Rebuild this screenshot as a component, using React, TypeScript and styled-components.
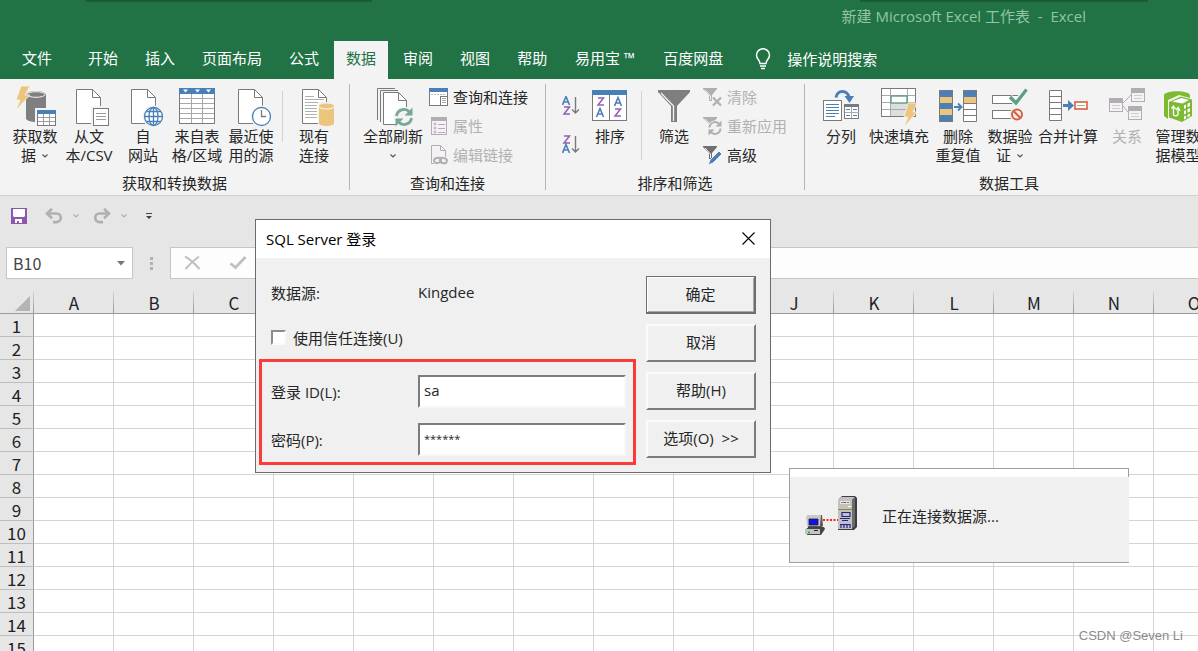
import React from "react";
import styled, { createGlobalStyle, css } from "styled-components";

const GREEN = "#217346";
const BLUE = "#4a80b8";
const GOLD = "#ecc57c";
const GREY = "#7a7a7a";
const MUTED = "#b0aeb0";
const SHEET_FONT = `"Noto Sans CJK SC", "Noto Sans", sans-serif`;

const GlobalStyle = createGlobalStyle`
  *, *::before, *::after { box-sizing: border-box; }
  body { margin: 0; overflow: hidden; background: #e6e6e6; }
  body, button, input {
    font-family: "Open Sans", "Noto Sans CJK SC", sans-serif;
    font-size: 15px;
    color: #262626;
  }
  svg { display: block; flex: none; }
`;

/* ---------- window frame ---------- */

const Window = styled.div`
  position: relative;
  display: flex;
  flex-direction: column;
  height: 100vh;
  overflow: hidden;
`;

const TitleBar = styled.header`
  height: 41px;
  flex: none;
  padding: 0 112px 0 0;
  display: flex;
  justify-content: flex-end;
  background:
    linear-gradient(rgba(0, 0, 0, 0.3), transparent) 86px 0 / 286px 3px no-repeat,
    linear-gradient(rgba(0, 0, 0, 0.3), transparent) 860px 0 / 288px 3px no-repeat,
    ${GREEN};
`;

const Title = styled.span`
  line-height: 32px;
  color: #93c4a6;
  white-space: pre;
`;

const TabStrip = styled.nav`
  height: 38px;
  flex: none;
  display: flex;
  gap: 3px;
  padding-left: 10px;
  background: ${GREEN};
`;

const Tab = styled.button<{ $active?: boolean; $file?: boolean; $wide?: boolean }>`
  border: 0;
  padding: 0 12px 5px;
  white-space: nowrap;
  background: ${(p) => (p.$active ? "#f3f3f3" : "transparent")};
  color: ${(p) => (p.$active ? GREEN : "#fff")};
  ${(p) => p.$file && css`margin-right: 9px;`}
  ${(p) => p.$wide && css`width: 86px; padding-inline: 0;`}
`;

const TellMe = styled.button`
  display: flex;
  align-items: center;
  gap: 16px;
  margin-left: 17px;
  padding: 0 0 3px;
  border: 0;
  background: transparent;
  color: #fff;
  white-space: nowrap;
`;

/* ---------- ribbon ---------- */

const Ribbon = styled.div`
  height: 117px;
  flex: none;
  display: flex;
  overflow: hidden;
  background: #f3f3f3;
  border-bottom: 1px solid #d0d0d0;
`;

const Group = styled.section`
  position: relative;
  flex: none;
  display: flex;
  flex-direction: column;
  justify-content: space-between;
  padding: 4px 9px 2px 8px;
  &::after {
    content: "";
    position: absolute;
    right: 0;
    top: 5px;
    bottom: 5px;
    width: 1px;
    background: #b5b5b5;
  }
`;

const GroupItems = styled.div`
  display: flex;
  align-items: flex-start;
`;

const GroupLabel = styled.div`
  text-align: center;
  line-height: 20px;
`;

const Big = styled.button<{ $w?: number }>`
  width: ${(p) => p.$w ?? 54}px;
  padding: 2px 0 0;
  border: 0;
  background: transparent;
  display: flex;
  flex-direction: column;
  align-items: center;
  line-height: 19px;
  white-space: nowrap;
  &:disabled { color: #b1b1b1; }
`;

const Line = styled.span`
  height: 19px;
  display: flex;
  align-items: center;
  gap: 5px;
`;

const Rule = styled.div<{ $h: number; $before?: number }>`
  width: 1px;
  height: ${(p) => p.$h}px;
  margin: 8px 4px 0 ${(p) => p.$before ?? 4}px;
  background: #d2d2d2;
`;

const SmallColumn = styled.div`
  display: flex;
  flex-direction: column;
  padding: 0 9px 0 1px;
`;

const Small = styled.button`
  height: 29px;
  padding: 0 0 2px;
  border: 0;
  background: transparent;
  display: flex;
  align-items: center;
  gap: 4px;
  white-space: nowrap;
  &:disabled { color: #b1b1b1; }
`;

const SortColumn = styled.div`
  display: flex;
  flex-direction: column;
  width: 34px;
  padding: 3px 0 0 8px;
`;

const SortButton = styled.button`
  height: 39px;
  padding: 0;
  border: 0;
  background: transparent;
`;

/* ---------- quick access and formula bar ---------- */

const QuickAccess = styled.div`
  height: 51px;
  flex: none;
  display: flex;
  align-items: flex-start;
  padding: 10px 0 0 10px;
`;

const QuickButton = styled.button<{ $w: number }>`
  width: ${(p) => p.$w}px;
  height: 20px;
  padding: 0;
  border: 0;
  background: transparent;
  display: flex;
  align-items: center;
`;

const FormulaRow = styled.div`
  height: 32px;
  flex: none;
  display: flex;
  padding-left: 6px;
`;

const NameBox = styled.div`
  width: 127px;
  display: flex;
  align-items: center;
  border: 1px solid #c6c6c6;
  background: #fff;
  padding: 0 7px 0 6px;
`;

const NameInput = styled.input`
  flex: 1;
  min-width: 0;
  padding: 0;
  border: 0;
  background: transparent;
  font-family: ${SHEET_FONT};
  font-size: 16px;
  color: #444;
`;

const Grip = styled.div`
  width: 37px;
  display: flex;
  flex-direction: column;
  align-items: center;
  justify-content: center;
  gap: 2px;
  i { width: 3px; height: 3px; background: #b0b0b0; }
`;

const FormulaBox = styled.div`
  flex: 1;
  display: flex;
  align-items: center;
  gap: 28px;
  padding-left: 13px;
  border: 1px solid #c6c6c6;
  border-right: 0;
  background: #fdfdfd;
`;

const FormulaAction = styled.button`
  padding: 0;
  border: 0;
  background: transparent;
`;

/* ---------- sheet ---------- */

const SheetArea = styled.main`
  flex: 1;
  min-height: 0;
  overflow: auto;
  scrollbar-width: none;
  padding-top: 12px;
`;

const Sheet = styled.table`
  table-layout: fixed;
  width: max-content;
  border-collapse: separate;
  border-spacing: 0;
  font-family: ${SHEET_FONT};
  font-size: 17px;
  background: #fff;
`;

const ColHead = styled.th`
  width: 80px;
  height: 23px;
  padding: 2px 0 0;
  font-weight: 400;
  line-height: 20px;
  color: #222;
  border-bottom: 1px solid #9b9b9b;
  background:
    linear-gradient(#d8d8d8, #979797) right / 1px 100% no-repeat,
    #e6e6e6;
`;

const Corner = styled(ColHead)`
  width: 34px;
  svg { margin: 1px 0 0 15px; }
`;

const RowHead = styled.th`
  height: 23px;
  padding: 2px 0 0;
  font-weight: 400;
  line-height: 20px;
  color: #222;
  background: #e6e6e6;
  border-right: 1px solid #9b9b9b;
  border-bottom: 1px solid #bdbdbd;
`;

const Cell = styled.td`
  padding: 0;
  border-right: 1px solid #d4d4d4;
  border-bottom: 1px solid #d4d4d4;
`;

/* ---------- login dialog ---------- */

const Dialog = styled.form`
  position: absolute;
  left: 255px;
  top: 219px;
  border: 1px solid #6b6b6b;
  background: #f0f0f0;
`;

const DialogTitle = styled.div`
  height: 38px;
  display: flex;
  align-items: center;
  justify-content: space-between;
  padding: 0 15px 2px 10px;
  background: #fff;
  color: #000;
`;

const CloseButton = styled.button`
  padding: 0;
  border: 0;
  background: transparent;
`;

const DialogBody = styled.div`
  display: flex;
  gap: 10px;
  padding: 18px 14px 7px 3px;
`;

const Fields = styled.div`
  width: 377px;
  display: flex;
  flex-direction: column;
`;

const InfoRow = styled.div`
  height: 36px;
  margin-bottom: 9px;
  padding: 0 0 4px 12px;
  display: flex;
  align-items: center;
`;

const FieldLabel = styled.label`
  width: 147px;
`;

const TrustLabel = styled.label`
  height: 36px;
  padding: 0 0 3px 12px;
  display: flex;
  align-items: center;
  gap: 7px;
`;

const Check = styled.input`
  appearance: none;
  width: 15px;
  height: 15px;
  margin: 0;
  background: #fff;
  border: 2px solid;
  border-color: #8c8c8c #fafafa #fafafa #8c8c8c;
`;

const Highlight = styled.div`
  margin-top: 2px;
  padding: 6px 0 0 9px;
  display: flex;
  flex-direction: column;
  gap: 2px;
  border: 3px solid #fb3b39;
`;

const FieldRow = styled.div`
  height: 46px;
  display: flex;
  align-items: center;
`;

const TextBox = styled.input<{ $masked?: boolean }>`
  width: 208px;
  height: 33px;
  padding: 0 4px 2px;
  background: #fff;
  border: 2px solid;
  border-color: #7c7c7c #f8f8f8 #f8f8f8 #7c7c7c;
  ${(p) => p.$masked && css`font-size: 11px;`}
`;

const Buttons = styled.div`
  display: flex;
  flex-direction: column;
  gap: 10px;
`;

const PushButton = styled.button<{ $primary?: boolean }>`
  width: 110px;
  height: 38px;
  padding: 0 0 3px;
  background: #f0f0f0;
  white-space: pre;
  border: 2px solid;
  border-color: #fafafa #7c7c7c #7c7c7c #fafafa;
  ${(p) =>
    p.$primary &&
    css`
      border-width: 1px 2px 2px 1px;
      border-color: #6e6e6e;
      box-shadow: inset 1px 1px #fff, inset -1px -1px #a8a8a8;
    `}
`;

/* ---------- connection notice ---------- */

const Notice = styled.div`
  position: absolute;
  left: 789px;
  top: 468px;
  width: 340px;
  border: 1px solid #a0a0a0;
  border-right: 0;
  background: #f0f0f0;
`;

const NoticeStrip = styled.div`
  height: 8px;
  background: #fff;
  border-right: 1px solid #a0a0a0;
`;

const NoticeBody = styled.div`
  height: 85px;
  padding: 0 0 8px 15px;
  display: flex;
  align-items: center;
  gap: 24px;
`;

const Watermark = styled.div`
  position: absolute;
  right: 15px;
  bottom: 6px;
  font-family: "Liberation Sans", sans-serif;
  font-size: 13px;
  line-height: 18px;
  color: #8c8c8c;
`;

/* ---------- icons ---------- */

const Icon = ({ children, w = 44, h = 42 }: { children: React.ReactNode; w?: number; h?: number }) => (
  <svg width={w} height={h} viewBox={`0 0 ${w} ${h}`} fill="none" aria-hidden="true">
    {children}
  </svg>
);

const Chevron = ({ color = "#555" }: { color?: string }) => (
  <svg width="8" height="6" viewBox="0 0 8 6" fill="none" aria-hidden="true">
    <path d="M1.500 1.500 4 4 6.500 1.500" stroke={color} strokeWidth="1.200" />
  </svg>
);

const Page = ({ x = 9, y = 4 }: { x?: number; y?: number }) => (
  <g transform={`translate(${x} ${y})`} stroke={GREY}>
    <path d="M.5.5H16.5L24.5 8.5V34.5H.5Z" fill="#fff" />
    <path d="M16.5.5V8.5H24.5" />
  </g>
);

const GetDataIcon = () => (
  <Icon>
    <path d="M13 9.500a10 3.500 0 0 1 20 0V33.500a10 3.500 0 0 1-20 0Z" fill="#7f7f7f" />
    <ellipse cx="23" cy="9.500" rx="9" ry="2.800" fill="#7f7f7f" stroke="#f3f3f3" />
    <path d="M8 1H17L12 10H17L3 25 7 15H3Z" fill={GOLD} stroke="#f3f3f3" strokeWidth=".8" />
    <rect x="22" y="23" width="22" height="19" fill="#f3f3f3" />
    <rect x="24.500" y="25.500" width="18" height="15" fill="#fff" stroke={GREY} />
    <path d="M24 25h19v4H24Z" fill={BLUE} />
    <path d="M30.500 29v11M36.500 29v11M25 32.500h17M25 36.500h17" stroke="#9b9b9b" />
  </Icon>
);

const TextFileIcon = () => (
  <Icon>
    <Page />
    <rect x="24" y="21" width="20" height="21" fill="#f3f3f3" />
    <rect x="26.500" y="23.500" width="15" height="17" fill="#fff" stroke={GREY} />
    <path d="M29 28.500h10M29 31.500h10M29 34.500h10" stroke="#9b9b9b" />
  </Icon>
);

const WebIcon = () => (
  <Icon>
    <Page x={10} />
    <circle cx="32.500" cy="31.500" r="11" fill="#f3f3f3" />
    <g stroke={BLUE} strokeWidth="1.300">
      <circle cx="32.500" cy="31.500" r="9" fill="#fff" />
      <ellipse cx="32.500" cy="31.500" rx="4.500" ry="9" />
      <path d="M32.500 22.500v18M23.500 31.500h18M25 26.500h15M25 36.500h15" />
    </g>
  </Icon>
);

const TableIcon = () => (
  <Icon>
    <rect x="4.500" y="3.500" width="35" height="35" fill="#fff" stroke={GREY} />
    <path d="M4 3h36v6H4Z" fill={BLUE} />
    <path d="M8 4.500h5L10.500 7.500ZM20 4.500h5L22.500 7.500ZM31 4.500h5L33.500 7.500Z" fill="#fff" />
    <path d="M16.500 9v29M27.500 9v29M5 13.500h34M5 18.500h34M5 23.500h34M5 28.500h34M5 33.500h34" stroke="#a8a8a8" />
  </Icon>
);

const RecentIcon = () => (
  <Icon>
    <Page />
    <circle cx="32.500" cy="31.500" r="11" fill="#f3f3f3" />
    <circle cx="32.500" cy="31.500" r="9" fill="#fff" stroke={BLUE} strokeWidth="1.300" />
    <path d="M32.500 25v6.500H37" stroke={GREY} strokeWidth="1.300" />
  </Icon>
);

const ExistingIcon = () => (
  <Icon>
    <Page x={10} />
    <path d="M13 11.500h9M13 14.500h19M13 17.500h13M13 20.500h12M13 23.500h12M13 26.500h12M13 29.500h12M13 32.500h12" stroke="#b0b0b0" />
    <path d="M26 17h17v25H26Z" fill="#f3f3f3" />
    <path d="M27 21a7.500 2.500 0 0 1 15 0V38.500a7.500 2.500 0 0 1-15 0Z" fill={GOLD} />
    <path d="M27 21.500a7.500 2.500 0 0 0 15 0" stroke="#fff" />
  </Icon>
);

const RefreshAllIcon = () => (
  <Icon>
    <path d="M6.500 35V3.500H24M9.500 37V5.500H27" stroke={GREY} />
    <path d="M12.500 7.500H27.500L35.500 15.500V39.500H12.500Z" fill="#fff" stroke={GREY} />
    <path d="M27.500 7.500V15.500H35.500" stroke={GREY} />
    <circle cx="33" cy="32" r="10.500" fill="#f3f3f3" />
    <path d="M25.500 31a7.500 7.500 0 0 1 13-4M40.500 33a7.500 7.500 0 0 1-13 4" stroke="#76a895" strokeWidth="2.800" />
    <path d="M41.500 22.500V30.500H33.500ZM24.500 41.500V33.500H32.500Z" fill="#76a895" />
  </Icon>
);

const QueriesIcon = () => (
  <Icon w={20} h={20}>
    <rect x=".5" y="1.500" width="18" height="17" fill="#fff" stroke={GREY} />
    <path d="M0 1h19v4H0Z" fill={BLUE} />
    <path d="M2 7.500h2M5 7.500h2M8 7.500h2M11 7.500h2M14 7.500h2" stroke="#bbb" />
    <path d="M11.500 9V18M12 9.500h6" stroke={GREY} />
    <path d="M13 11.500h4M13 13.500h4M13 15.500h4" stroke="#aaa" />
  </Icon>
);

const PropertiesIcon = () => (
  <Icon w={20} h={20}>
    <rect x="2.500" y="1.500" width="15" height="17" fill="#f6f1f7" stroke={MUTED} />
    <path d="M2 1h16v4H2Z" fill={MUTED} />
    <g stroke={MUTED}>
      <circle cx="6" cy="8" r="1" /><circle cx="6" cy="12" r="1" /><circle cx="6" cy="16" r="1" />
      <path d="M9 8.500h7M9 12.500h7M9 16.500h7" />
    </g>
  </Icon>
);

const EditLinksIcon = () => (
  <Icon w={20} h={20}>
    <path d="M2.500 18.500V.5H11.500L16.500 5.500V12" fill="#f6f1f7" stroke={MUTED} />
    <path d="M11.500.5V5.500H16.500M2.500 18.500H5" stroke={MUTED} />
    <g stroke={MUTED} strokeWidth="2">
      <rect x="5" y="13" width="7" height="5" rx="2.500" transform="rotate(-12 8 15)" />
      <rect x="11" y="13" width="7" height="5" rx="2.500" transform="rotate(12 14 15)" />
    </g>
  </Icon>
);

const LetterA = ({ x, y }: { x: number; y: number }) => (
  <path transform={`translate(${x} ${y})`} d="M.5 9 4 .5 7.500 9M1.800 6h4.400" stroke={BLUE} strokeWidth="1.600" />
);
const LetterZ = ({ x, y }: { x: number; y: number }) => (
  <path transform={`translate(${x} ${y})`} d="M1 1H6.500L1 8H7" stroke="#9161b3" strokeWidth="1.500" />
);

const SortIcon = ({ desc }: { desc?: boolean }) => (
  <Icon w={20} h={20}>
    {desc ? (
      <><LetterZ x={1} y={0} /><LetterA x={0} y={9} /></>
    ) : (
      <><LetterA x={0} y={0} /><LetterZ x={1} y={10} /></>
    )}
    <path d="M13.500 1V17M10 13.500 13.500 17 17 13.500" stroke={GREY} strokeWidth="1.400" />
  </Icon>
);

const SortDialogIcon = () => (
  <Icon>
    <rect x="4.500" y="5.500" width="34" height="30" fill="#fff" stroke={GREY} />
    <path d="M4 5h35v5H4Z" fill={BLUE} />
    <path d="M21.500 10v25" stroke={GREY} />
    <LetterZ x={9} y={12} /><LetterA x={8} y={23} />
    <LetterA x={26} y={12} /><LetterZ x={26} y={23} />
  </Icon>
);

const FilterIcon = () => (
  <Icon>
    <path d="M6 5H38V7L25 21V37H19V21L6 7Z" fill="#7f7f7f" />
    <path d="M9 8 21.500 21V36" stroke="#f3f3f3" strokeWidth="1.300" />
  </Icon>
);

const funnel = "M0 1H14V2L9 8V14H6V8L0 2Z";

const ClearIcon = () => (
  <Icon w={20} h={20}>
    <path d={funnel} fill={MUTED} /><path d="M2 3 7.500 9V13" stroke="#f3f3f3" />
    <path d="M10 10.500 18 18.500M18 10.500 10 18.500" stroke="#f3f3f3" strokeWidth="4" />
    <path d="M10 10.500 18 18.500M18 10.500 10 18.500" stroke={MUTED} strokeWidth="2.200" />
  </Icon>
);

const ReapplyIcon = () => (
  <Icon w={20} h={20}>
    <path d={funnel} fill={MUTED} /><path d="M2 3 7.500 9V13" stroke="#f3f3f3" />
    <circle cx="12" cy="12" r="7.500" fill="#f3f3f3" />
    <path d="M6.500 11.500a5.500 5.500 0 0 1 10-3M17.500 12.500a5.500 5.500 0 0 1-10 3" stroke={MUTED} strokeWidth="2" />
    <path d="M18.500 4.500V10.500H12.500ZM5.500 19.500V13.500H11.500Z" fill={MUTED} />
  </Icon>
);

const AdvancedIcon = () => (
  <Icon w={20} h={20}>
    <path d={funnel} fill="#6f6f6f" /><path d="M2 3 7.500 9V13" stroke="#f3f3f3" />
    <path d="M5 20 7 15 16 6 19 9 10 18Z" fill={BLUE} stroke="#f3f3f3" />
  </Icon>
);

const SplitIcon = () => (
  <Icon>
    <rect x="4.500" y="15.500" width="18" height="20" fill="#fff" stroke={GREY} />
    <path d="M7 19.500h13M7 22.500h13M7 25.500h13M7 28.500h13M7 31.500h9" stroke={BLUE} />
    <rect x="25.500" y="19.500" width="14" height="14" fill="#fff" stroke={GREY} />
    <path d="M25 19h15v3H25Z" fill={GREY} />
    <path d="M32.500 22v11M26 27.500h14" stroke="#aaa" />
    <path d="M27 24.500h4M34 24.500h4M27 30.500h4M34 30.500h4" stroke={BLUE} />
    <path d="M17 12.500C18 5 28 4 30.500 13" stroke={BLUE} strokeWidth="3" />
    <path d="M25.500 11H35L30.500 18Z" fill={BLUE} />
  </Icon>
);

const FlashFillIcon = () => (
  <Icon>
    <rect x="4.500" y="3.500" width="34" height="28" fill="#fff" stroke={GREY} />
    <path d="M14 18h16v13H14Z" fill="#dedede" />
    <path d="M13.500 4v27M30.500 4v27M5 10.500h33M5 17.500h33M5 24.500h33" stroke="#ababab" />
    <rect x="14" y="11" width="16" height="7" fill="#fff" stroke="#5d9f84" strokeWidth="1.400" />
    <path d="M31 18H40L36 27H40L27 42 31 32H27Z" fill={GOLD} stroke="#f3f3f3" strokeWidth=".8" />
  </Icon>
);

const DuplicatesIcon = () => (
  <Icon>
    <path d="M3 5h14v32H3ZM27 5h14v7H27Z" fill={BLUE} />
    <path d="M4 12h12v6H4ZM4 24h12v6H4ZM28 12h12v6H28Z" fill={GOLD} />
    <path d="M28 18h12v18H28Z" fill="#fff" />
    <path d="M3.500 5.500h13v31h-13ZM27.500 5.500h13v31h-13ZM28 18.500h12M28 24.500h12M28 30.500h12" stroke={GREY} />
    <path d="M18 22h7M22 18.500 25.500 22 22 25.500" stroke={BLUE} strokeWidth="1.800" />
  </Icon>
);

const ValidationIcon = () => (
  <Icon>
    <rect x="4.500" y="10.500" width="26" height="8" fill="#fff" stroke={GREY} />
    <rect x="4.500" y="25.500" width="26" height="8" fill="#fff" stroke={GREY} />
    <path d="M22 12 28 18 38.500 4.500" stroke="#f3f3f3" strokeWidth="6" />
    <path d="M22 12 28 18 38.500 4.500" stroke="#5d9f84" strokeWidth="3.200" />
    <circle cx="29" cy="29.500" r="7.500" fill="#f3f3f3" />
    <circle cx="29" cy="29.500" r="5" stroke="#d9603f" strokeWidth="2" />
    <path d="M25.500 26 32.500 33" stroke="#d9603f" strokeWidth="2" />
  </Icon>
);

const ConsolidateIcon = () => (
  <Icon>
    <path d="M3.500 5.500h12v30h-12ZM3.500 11.500h12M3.500 17.500h12M3.500 23.500h12M3.500 29.500h12" fill="#fff" stroke={GREY} />
    <path d="M17 19h5v-4l6 5.500-6 5.500v-4h-5Z" fill={BLUE} />
    <rect x="29" y="17" width="12" height="7" fill="#fff" stroke="#d9603f" strokeWidth="1.600" />
    <path d="M31 20.500h8" stroke="#aaa" />
  </Icon>
);

const RelationBox = ({ x, y }: { x: number; y: number }) => (
  <g transform={`translate(${x} ${y})`}>
    <rect x=".5" y=".5" width="13" height="13" fill="#f6f1f7" stroke={MUTED} />
    <path d="M0 0h14v5H0Z" fill={MUTED} />
    <path d="M3 7.500h8M3 10.500h8" stroke="#d0ccd2" />
  </g>
);

const RelationsIcon = () => (
  <Icon>
    <path d="M18 18 26 10M18 21 23 27" stroke={MUTED} />
    <RelationBox x={4} y={13} /><RelationBox x={26} y={3} /><RelationBox x={23} y={21} />
  </Icon>
);

const ModelIcon = () => (
  <Icon>
    <path d="M8 10C10 5 32 5 34 10V13L23 10 12 15V34L8 31Z" fill="#7dba32" />
    <path d="M13 17 25 11.500 36 14.500V31L26 37 13 32.500Z" fill="#7dba32" />
    <path d="M16 16.500 25.500 13 33 15 26.500 18.500Z" fill="#fff" />
    <path d="M28 20.500 30 19.500V23L28 24ZM31.500 18.800 34 17.500V21L31.500 22.200ZM28 26 30 25V28.500L28 29.500ZM31.500 24.200 34 23V26.500L31.500 27.700ZM28 31.500 30 30.500V33.500L28 34.500ZM31.500 29.700 34 28.500V31L31.500 32.500Z" fill="#fff" />
    <path d="M17.500 22V29.500C17.500 31 21.500 31.500 22 29.500V23.500" stroke="#fff" strokeWidth="1.300" />
    <path d="M15.500 23.500 17.500 21 19.500 24M20 25 22.200 22.500 24 26" stroke="#fff" strokeWidth="1.300" />
  </Icon>
);

const UndoArrow = ({ flip }: { flip?: boolean }) => (
  <svg width="18" height="16" viewBox="0 0 18 16" fill="none" aria-hidden="true">
    <g transform={flip ? "translate(18 0) scale(-1 1)" : undefined} stroke="#b0b0b0" strokeWidth="2.600">
      <path d="M2 5.500H11.500a4.300 4.300 0 0 1 0 8.600H8" />
      <path d="M7 .8 2 5.500 7 10.200" />
    </g>
  </svg>
);

const ConnectingArt = () => (
  <Icon w={53} h={42}>
    <path d="M34 4 37 1H50L52 3V32L49 35H33V6Z" fill="#3d3d3d" />
    <path d="M33 5 36 2H50L47 5V34H33Z" fill="#c2c2c2" />
    <path d="M47 5 50 2V31L47 34Z" fill="#6b6b6b" />
    <path d="M35 6h10v3H35Z" fill="#e4e4e4" />
    <path d="M36 7.500h3" stroke="#888" /><path d="M39 7.500h2" stroke="#d22" /><path d="M42 7.500h2" stroke="#2b2" />
    <path d="M33 14.500h14" stroke="#918a2a" />
    <path d="M43 11.500h3" stroke="#fff" />
    <path d="M37 17.500h8v4h-8ZM35 23.500h10M37 25.500h6M35 29.500h10M36 33V29M39 33V30M42 33V30M45 33V29" stroke="#24248c" strokeWidth="1.200" />
    <path d="M18 25h15" stroke="#f22" strokeWidth="2" strokeDasharray="2 1.500" />
    <path d="M2 21 4 20H17L18 31 15 33H3Z" fill="#555" />
    <path d="M1 22 3 20H16L15 31H2Z" fill="#c9c9c9" />
    <path d="M4 24h9v6H4Z" fill="#11e" stroke="#222" strokeWidth=".8" />
    <path d="M1 34 4 32H19L20 34 16 40H2Z" fill="#444" />
    <path d="M0 34H15V39H0Z" fill="#c4c4c4" />
    <path d="M3 37.500h2" stroke="#0b0" strokeWidth="1.500" /><path d="M9 35.500h4" stroke="#222" />
  </Icon>
);

/* ---------- data ---------- */

type BigItem = { icon: React.ReactNode; lines: string[]; w?: number; drop?: boolean; disabled?: boolean };

const getItems: BigItem[] = [
  { icon: <GetDataIcon />, lines: ["获取数", "据"], drop: true },
  { icon: <TextFileIcon />, lines: ["从文", "本/CSV"] },
  { icon: <WebIcon />, lines: ["自", "网站"] },
  { icon: <TableIcon />, lines: ["来自表", "格/区域"] },
  { icon: <RecentIcon />, lines: ["最近使", "用的源"] },
];

const toolItems: BigItem[] = [
  { icon: <SplitIcon />, lines: ["分列"], w: 56 },
  { icon: <FlashFillIcon />, lines: ["快速填充"], w: 60 },
  { icon: <DuplicatesIcon />, lines: ["删除", "重复值"], w: 58 },
  { icon: <ValidationIcon />, lines: ["数据验", "证"], w: 46, drop: true },
  { icon: <ConsolidateIcon />, lines: ["合并计算"], w: 70 },
  { icon: <RelationsIcon />, lines: ["关系"], w: 48, disabled: true },
  { icon: <ModelIcon />, lines: ["管理数", "据模型"], w: 54 },
];

const BigButton = ({ icon, lines, w, drop, disabled }: BigItem) => (
  <Big type="button" $w={w} disabled={disabled}>
    {icon}
    {lines.map((line, i) => (
      <Line key={i}>
        {line}
        {drop && i === lines.length - 1 && <Chevron />}
      </Line>
    ))}
  </Big>
);

const tabs = ["开始", "插入", "页面布局", "公式", "数据", "审阅", "视图", "帮助", "易用宝 ™", "百度网盘"];
const columns = "ABCDEFGHIJKLMNOPQRST".split("");
const rows = Array.from({ length: 30 }, (_, i) => i + 1);

export default function App() {
  return (
    <Window>
      <GlobalStyle />
      <TitleBar>
        <Title>{"新建 Microsoft Excel 工作表  -  Excel"}</Title>
      </TitleBar>

      <TabStrip>
        <Tab type="button" $file>文件</Tab>
        {tabs.map((t) => (
          <Tab key={t} type="button" $active={t === "数据"} $wide={t.includes("™")}>{t}</Tab>
        ))}
        <TellMe type="button">
          <svg width="16" height="22" viewBox="0 0 16 22" fill="none" stroke="#fff" strokeWidth="1.500" aria-hidden="true">
            <path d="M5 15.500C5 12 1.500 11 1.500 7.200a6.500 6.500 0 0 1 13 0C14.500 11 11 12 11 15.500Z" />
            <path d="M5 18h6M6 20.500h4" />
          </svg>
          操作说明搜索
        </TellMe>
      </TabStrip>

      <Ribbon>
        <Group>
          <GroupItems>
            {getItems.map((item) => <BigButton key={item.lines[0]} {...item} />)}
            <Rule $h={51} />
            <BigButton icon={<ExistingIcon />} lines={["现有", "连接"]} />
          </GroupItems>
          <GroupLabel>获取和转换数据</GroupLabel>
        </Group>

        <Group>
          <GroupItems>
            <BigButton icon={<RefreshAllIcon />} lines={["全部刷新", ""]} w={70} drop />
            <SmallColumn>
              <Small type="button"><QueriesIcon />查询和连接</Small>
              <Small type="button" disabled><PropertiesIcon />属性</Small>
              <Small type="button" disabled><EditLinksIcon />编辑链接</Small>
            </SmallColumn>
          </GroupItems>
          <GroupLabel>查询和连接</GroupLabel>
        </Group>

        <Group>
          <GroupItems>
            <SortColumn>
              <SortButton type="button" aria-label="升序"><SortIcon /></SortButton>
              <SortButton type="button" aria-label="降序"><SortIcon desc /></SortButton>
            </SortColumn>
            <BigButton icon={<SortDialogIcon />} lines={["排序"]} w={44} />
            <Rule $h={69} $before={9} />
            <BigButton icon={<FilterIcon />} lines={["筛选"]} w={56} />
            <SmallColumn>
              <Small type="button" disabled><ClearIcon />清除</Small>
              <Small type="button" disabled><ReapplyIcon />重新应用</Small>
              <Small type="button"><AdvancedIcon />高级</Small>
            </SmallColumn>
          </GroupItems>
          <GroupLabel>排序和筛选</GroupLabel>
        </Group>

        <Group>
          <GroupItems>
            {toolItems.map((item) => <BigButton key={item.lines[0]} {...item} />)}
          </GroupItems>
          <GroupLabel>数据工具</GroupLabel>
        </Group>
      </Ribbon>

      <QuickAccess>
        <QuickButton type="button" aria-label="保存" $w={35}>
          <svg width="18" height="18" viewBox="0 0 18 18" aria-hidden="true">
            <path d="M1 1H17V17H1Z" fill="#8d57ad" />
            <path d="M3 2H15V9L14 10H4L3 9ZM5 12H12V16H9V14H7V16H5Z" fill="#fff" />
          </svg>
        </QuickButton>
        <QuickButton type="button" aria-label="撤消" $w={27}><UndoArrow /></QuickButton>
        <QuickButton type="button" aria-label="撤消选项" $w={21}><Chevron color="#b0b0b0" /></QuickButton>
        <QuickButton type="button" aria-label="恢复" $w={27}><UndoArrow flip /></QuickButton>
        <QuickButton type="button" aria-label="恢复选项" $w={25}><Chevron color="#b0b0b0" /></QuickButton>
        <QuickButton type="button" aria-label="自定义" $w={12}>
          <svg width="8" height="8" viewBox="0 0 8 8" aria-hidden="true">
            <path d="M1 1h6v1H1ZM1 4h6L4 7Z" fill="#444" />
          </svg>
        </QuickButton>
      </QuickAccess>

      <FormulaRow>
        <NameBox>
          <NameInput aria-label="名称框" defaultValue="B10" />
          <svg width="8" height="5" viewBox="0 0 8 5" aria-hidden="true"><path d="M0 0H8L4 4.500Z" fill="#777" /></svg>
        </NameBox>
        <Grip><i /><i /><i /></Grip>
        <FormulaBox>
          <FormulaAction type="button" aria-label="取消输入">
            <svg width="17" height="16" viewBox="0 0 17 16" fill="none" stroke="#c0c0c0" strokeWidth="2" aria-hidden="true">
              <path d="M1 1.500C6 4 11 9 15.500 14M15 1.500C10 5 5 10 1.500 14" />
            </svg>
          </FormulaAction>
          <FormulaAction type="button" aria-label="输入">
            <svg width="18" height="16" viewBox="0 0 18 16" fill="none" stroke="#c0c0c0" strokeWidth="2.800" aria-hidden="true">
              <path d="M1.500 8.500 6.500 12.500 16.500 2" />
            </svg>
          </FormulaAction>
        </FormulaBox>
      </FormulaRow>

      <SheetArea>
        <Sheet>
          <thead>
            <tr>
              <Corner aria-label="全选">
                <svg width="16" height="16" viewBox="0 0 16 16" aria-hidden="true"><path d="M15 0V15H0Z" fill="#b4b4b4" /></svg>
              </Corner>
              {columns.map((c) => <ColHead key={c}>{c}</ColHead>)}
            </tr>
          </thead>
          <tbody>
            {rows.map((r) => (
              <tr key={r}>
                <RowHead>{r}</RowHead>
                {columns.map((c) => <Cell key={c} />)}
              </tr>
            ))}
          </tbody>
        </Sheet>
      </SheetArea>

      <Dialog onSubmit={(e) => e.preventDefault()}>
        <DialogTitle>
          SQL Server 登录
          <CloseButton type="button" aria-label="关闭">
            <svg width="13" height="13" viewBox="0 0 13 13" stroke="#000" strokeWidth="1.100" aria-hidden="true">
              <path d="M.5.5 12.500 12.500M12.500.5.5 12.500" />
            </svg>
          </CloseButton>
        </DialogTitle>
        <DialogBody>
          <Fields>
            <InfoRow>
              <FieldLabel as="span">数据源:</FieldLabel>
              <span>Kingdee</span>
            </InfoRow>
            <TrustLabel>
              <Check type="checkbox" />
              使用信任连接(U)
            </TrustLabel>
            <Highlight>
              <FieldRow>
                <FieldLabel htmlFor="login-id">登录 ID(L):</FieldLabel>
                <TextBox id="login-id" defaultValue="sa" />
              </FieldRow>
              <FieldRow>
                <FieldLabel htmlFor="login-password">密码(P):</FieldLabel>
                <TextBox id="login-password" defaultValue="******" $masked />
              </FieldRow>
            </Highlight>
          </Fields>
          <Buttons>
            <PushButton type="submit" $primary>确定</PushButton>
            <PushButton type="button">取消</PushButton>
            <PushButton type="button">帮助(H)</PushButton>
            <PushButton type="button">{"选项(O)  >>"}</PushButton>
          </Buttons>
        </DialogBody>
      </Dialog>

      <Notice role="status">
        <NoticeStrip />
        <NoticeBody>
          <ConnectingArt />
          正在连接数据源...
        </NoticeBody>
      </Notice>

      <Watermark>CSDN @Seven Li</Watermark>
    </Window>
  );
}
